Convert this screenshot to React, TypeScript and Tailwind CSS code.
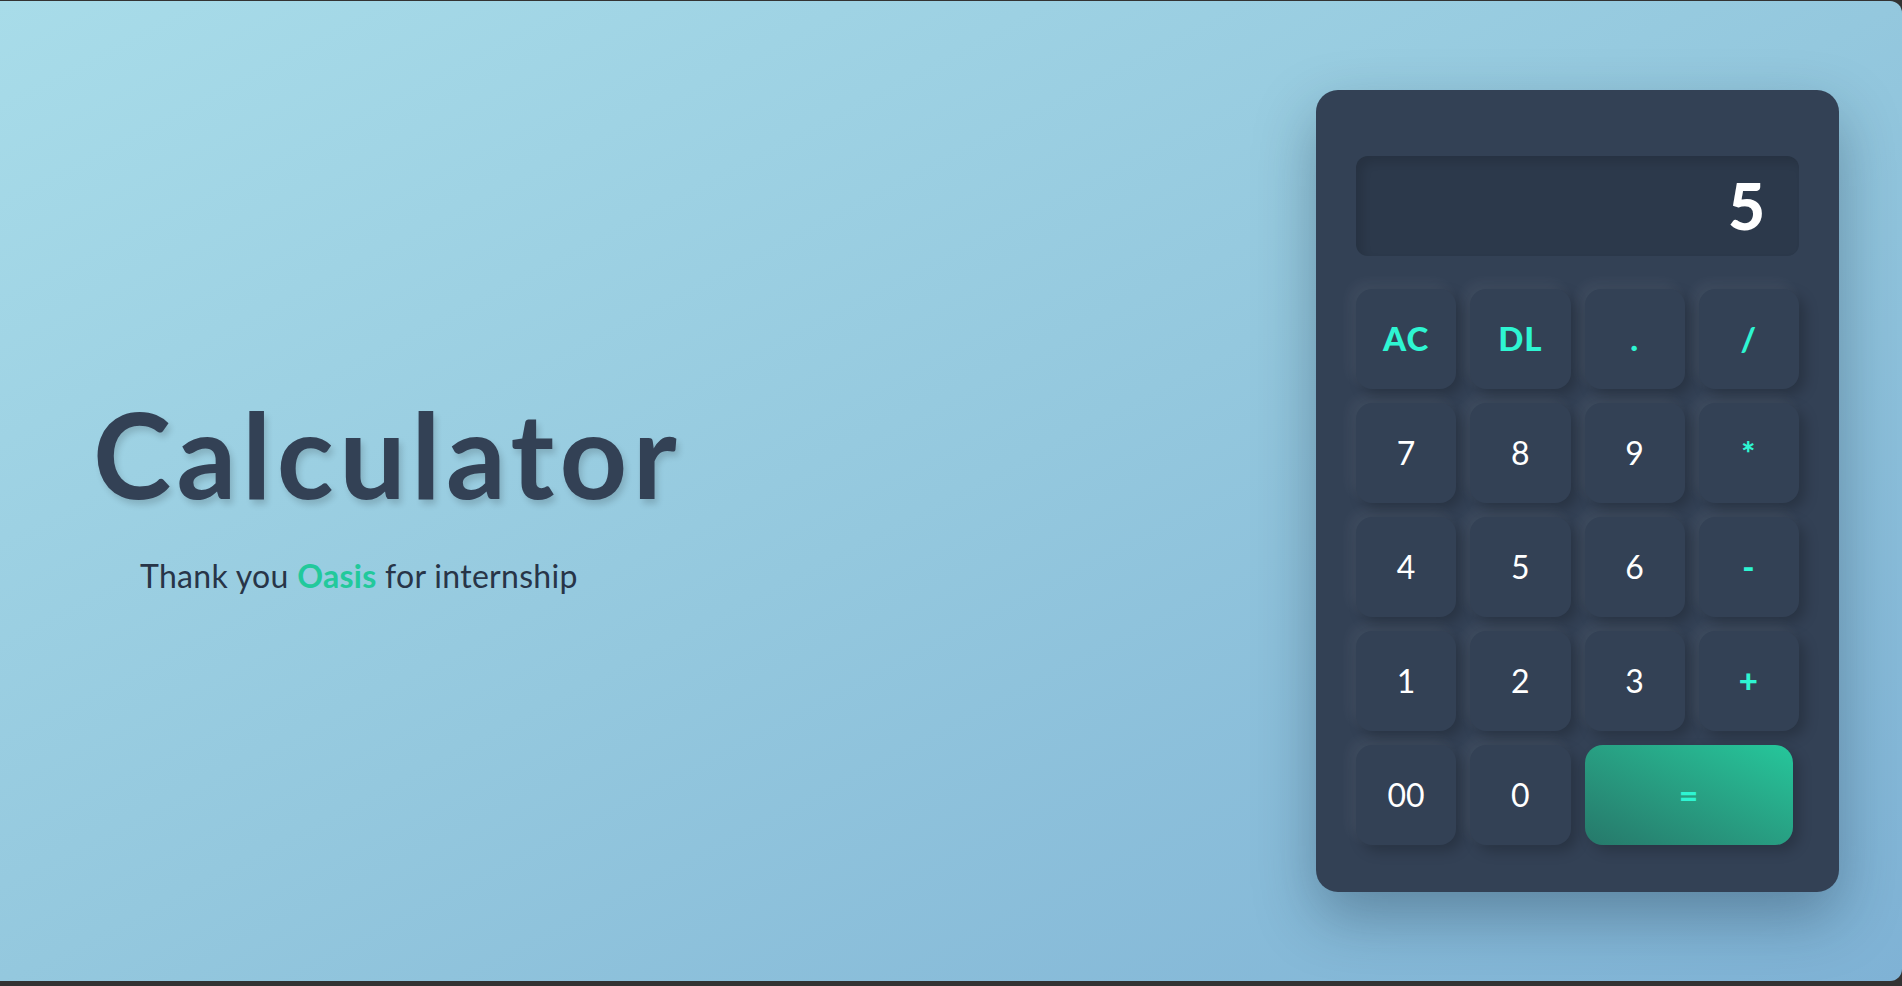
import React, { useState } from 'react';

const keys = [
  { label: 'AC', type: 'op' },
  { label: 'DL', type: 'op' },
  { label: '.', type: 'op' },
  { label: '/', type: 'op' },
  { label: '7', type: 'num' },
  { label: '8', type: 'num' },
  { label: '9', type: 'num' },
  { label: '*', type: 'op' },
  { label: '4', type: 'num' },
  { label: '5', type: 'num' },
  { label: '6', type: 'num' },
  { label: '-', type: 'op' },
  { label: '1', type: 'num' },
  { label: '2', type: 'num' },
  { label: '3', type: 'num' },
  { label: '+', type: 'op' },
  { label: '00', type: 'num' },
  { label: '0', type: 'num' },
];

const App: React.FC = () => {
  const [value, setValue] = useState('5');

  const press = (k: string) => {
    if (k === 'AC') return setValue('');
    if (k === 'DL') return setValue(v => v.slice(0, -1));
    setValue(v => v + k);
  };

  const calc = () => {
    try {
      // eslint-disable-next-line no-new-func
      setValue(String(Function(`return (${value})`)()));
    } catch (e) {
      setValue('Error');
    }
  };

  return (
    <div className="min-h-screen bg-[#333] pt-px" style={{ fontFamily: 'Lato, "Open Sans", sans-serif' }}>
      <div className="h-[980px] rounded-r-[12px] bg-gradient-to-br from-[#a8dce9] via-[#94c8de] to-[#7fb2d5] flex items-center justify-between pl-[93px] pr-[63px]">
        <div className="flex flex-col pt-[13px]">
          <h1 className="text-[118px] leading-none font-bold tracking-[5.5px] text-[#334155] [text-shadow:3px_5px_6px_rgba(0,0,0,0.15)]">
            Calculator
          </h1>
          <p className="mt-[39px] ml-[47px] text-[32px] tracking-[0.3px] text-[#283548]">
            Thank you <span className="font-bold text-[#22c99b]">Oasis</span> for internship
          </p>
        </div>

        <div className="w-[523px] h-[802px] rounded-[22px] bg-[#334155] px-[40px] pt-[66px] pb-[49px] shadow-[0_25px_60px_rgba(20,40,60,0.35)]">
          <div className="h-[100px] rounded-[12px] bg-[#2c394b] flex items-center justify-end pr-[34px] shadow-[inset_6px_6px_10px_rgba(0,0,0,0.12)]">
            <span className="text-[64px] font-black text-white leading-none">{value}</span>
          </div>

          <div className="mt-[33px] grid grid-cols-4 gap-[14px] auto-rows-[100px]">
            {keys.map(k => (
              <button
                key={k.label}
                onClick={() => press(k.label)}
                className={`rounded-[16px] bg-[#334155] flex items-center justify-center shadow-[-6px_-6px_14px_rgba(255,255,255,0.06),6px_6px_14px_rgba(0,0,0,0.22)] ${
                  k.type === 'op' ? 'text-[#2ef5d2] font-black text-[33px] tracking-[1px]' : 'text-white text-[32px]'
                }`}
              >
                {k.label}
              </button>
            ))}
            <button
              onClick={calc}
              className="col-span-2 w-[208px] rounded-[18px] bg-gradient-to-tr from-[#26786a] to-[#25c79b] text-[#2ef5d2] font-black text-[33px] flex items-center justify-center shadow-[6px_6px_14px_rgba(0,0,0,0.2)]"
            >
              =
            </button>
          </div>
        </div>
      </div>
    </div>
  );
};

export default App;
